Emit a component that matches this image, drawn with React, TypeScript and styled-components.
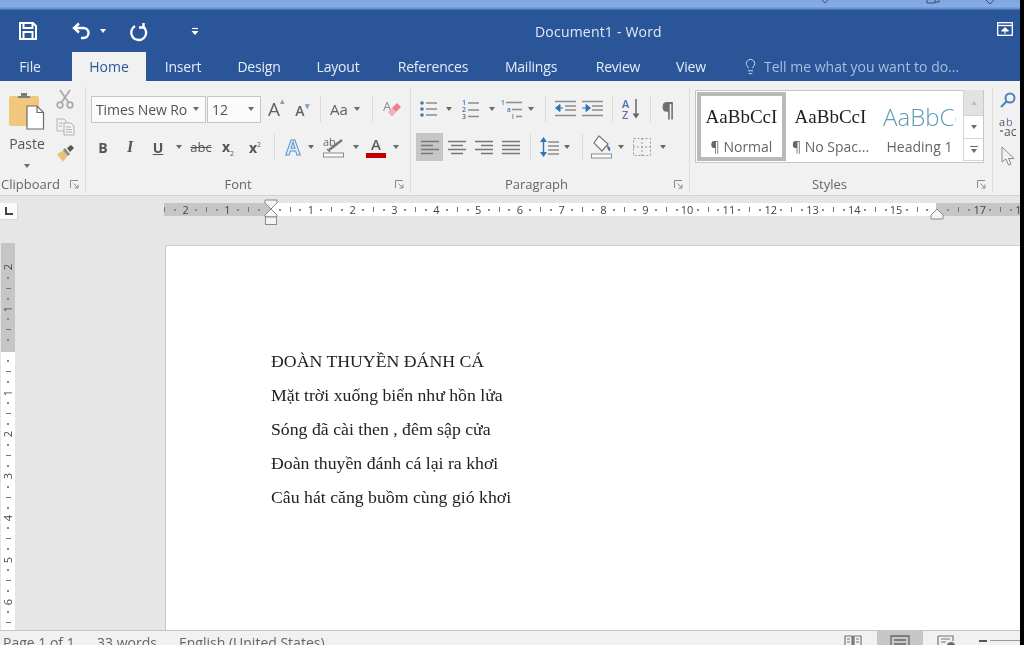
import React from "react";
import styled, { createGlobalStyle } from "styled-components";
import { Lightbulb } from "lucide-react";

const UI_FONT = `"Open Sans", "Noto Sans", sans-serif`;

const GlobalStyle = createGlobalStyle`
  html, body {
    margin: 0;
    padding: 0;
    background: #000000;
  }
  * {
    box-sizing: border-box;
  }
  svg {
    overflow: visible;
  }
`;

const TABS = [
  { label: "Insert", width: 74 },
  { label: "Design", width: 78 },
  { label: "Layout", width: 80 },
  { label: "References", width: 110 },
  { label: "Mailings", width: 86 },
  { label: "Review", width: 88 },
  { label: "View", width: 58 },
];

const POEM = [
  "ĐOÀN THUYỀN ĐÁNH CÁ",
  "Mặt trời xuống biển như hồn lửa",
  "Sóng đã cài then , đêm sập cửa",
  "Đoàn thuyền đánh cá lại ra khơi",
  "Câu hát căng buồm cùng gió khơi",
];

const H_NUMBERS = [-2, -1, 0, 1, 2, 3, 4, 5, 6, 7, 8, 9, 10, 11, 12, 13, 14, 15, 16, 17, 18];
const V_NUMBERS = [2, 1, 0, 1, 2, 3, 4, 5, 6, 7];

export default function App() {
  return (
    <Screen>
      <GlobalStyle />
      <Word>
        <TopStrip>
          <svg width="10" height="4" viewBox="0 0 10 4"><path d="M2 0l3 3 3-3" fill="none" stroke="#3a4f70" strokeWidth="1" /></svg>
          <StripGap $w={96} />
          <svg width="14" height="5" viewBox="0 0 14 5"><path d="M1 0v3h8V0M9 2h4V0" fill="none" stroke="#3a4f70" strokeWidth="1" /></svg>
          <StripGap $w={44} />
          <svg width="12" height="5" viewBox="0 0 12 5"><path d="M2 0l4 4 4-4" fill="none" stroke="#3a4f70" strokeWidth="1" /></svg>
        </TopStrip>
        <TitleBar>
          <QuickAccess>
            <QuickSlot $w={54}><SaveIcon /></QuickSlot>
            <QuickSlot $w={24}><UndoIcon /></QuickSlot>
            <QuickSlot $w={14} $indent={4}><Caret $light /></QuickSlot>
            <QuickSlot $w={38} $indent={19}><RedoIcon /></QuickSlot>
            <QuickSlot $w={68} $indent={43}><CustomizeIcon /></QuickSlot>
          </QuickAccess>
          <DocTitle>Document1 - Word</DocTitle>
          <RibbonDisplay><RibbonDisplayIcon /></RibbonDisplay>
        </TitleBar>
        <TabBar>
          <Tab $w={72} $pr={12}>File</Tab>
          <ActiveTab>Home</ActiveTab>
          {TABS.map((t) => (
            <Tab key={t.label} $w={t.width}>{t.label}</Tab>
          ))}
          <TellMe>
            <Lightbulb size={17} strokeWidth={1.4} color="#c5d4ea" />
            <span>Tell me what you want to do...</span>
          </TellMe>
        </TabBar>
        <Ribbon>
          <Group $w={86}>
            <ClipboardBody>
              <PasteColumn>
                <PasteIcon />
                <PasteLabel>Paste</PasteLabel>
                <Caret />
              </PasteColumn>
              <SmallColumn>
                <CutIcon />
                <CopyIcon />
                <PainterIcon />
              </SmallColumn>
            </ClipboardBody>
            <GroupFooter>
              <GroupLabel $pr={9}>Clipboard</GroupLabel>
              <Launcher />
            </GroupFooter>
          </Group>

          <Group $w={325} $pl={5}>
            <GroupBody>
              <ToolRow>
                <FontBox $w={115}><span>Times New Ro</span><Caret /></FontBox>
                <FontBox $w={54}><span>12</span><Caret /></FontBox>
                <Tool $w={24}><BigA>A<TinyMark>▴</TinyMark></BigA></Tool>
                <Tool $w={28}><SmallA>A<TinyMark>▾</TinyMark></SmallA></Tool>
                <Sep $m={6} />
                <Tool $w={24}><CaseText>Aa</CaseText></Tool>
                <Tool $w={12}><Caret /></Tool>
                <Sep $m={9} />
                <Tool $w={20}><ClearIcon /></Tool>
              </ToolRow>
              <ToolRow>
                <Tool $w={24}><BoldB>B</BoldB></Tool>
                <Tool $w={30}><ItalicI>I</ItalicI></Tool>
                <Tool $w={26}><UnderU>U</UnderU></Tool>
                <Tool $w={16}><Caret /></Tool>
                <Tool $w={28}><StrikeAbc>abc</StrikeAbc></Tool>
                <Tool $w={26}><ScriptX>x<sub>2</sub></ScriptX></Tool>
                <Tool $w={28}><ScriptX>x<sup>2</sup></ScriptX></Tool>
                <Sep $m={5} />
                <Tool $w={26}><EffectA>A</EffectA></Tool>
                <Tool $w={10}><Caret /></Tool>
                <Tool $w={36}><HighlightIcon /></Tool>
                <Tool $w={8}><Caret /></Tool>
                <Tool $w={32}><ColorA>A<ColorBar /></ColorA></Tool>
                <Tool $w={8}><Caret /></Tool>
              </ToolRow>
            </GroupBody>
            <GroupFooter>
              <GroupLabel $pr={10}>Font</GroupLabel>
              <Launcher />
            </GroupFooter>
          </Group>

          <Group $w={279} $pl={5}>
            <GroupBody>
              <ToolRow>
                <Tool $w={26}><BulletsIcon /></Tool>
                <Tool $w={14}><Caret /></Tool>
                <Tool $w={30}><NumbersIcon /></Tool>
                <Tool $w={12}><Caret /></Tool>
                <Tool $w={28}><MultilevelIcon /></Tool>
                <Tool $w={10}><Caret /></Tool>
                <Sep $m={9} />
                <Tool $w={20}><IndentIcon /></Tool>
                <Tool $w={34}><IndentIcon $flip /></Tool>
                <Sep $m={3} />
                <Tool $w={32}><SortIcon /></Tool>
                <Sep $m={2} />
                <Tool $w={30}><Pilcrow>¶</Pilcrow></Tool>
              </ToolRow>
              <ToolRow>
                <Tool $w={27} $active><AlignIcon kind="left" /></Tool>
                <Tool $w={27}><AlignIcon kind="center" /></Tool>
                <Tool $w={28}><AlignIcon kind="right" /></Tool>
                <Tool $w={26}><AlignIcon kind="justify" /></Tool>
                <Sep $m={6} />
                <Tool $w={24}><LineSpacingIcon /></Tool>
                <Tool $w={12}><Caret /></Tool>
                <Sep $m={9} />
                <Tool $w={20}><ShadingIcon /></Tool>
                <Tool $w={18}><Caret /></Tool>
                <Tool $w={24}><BordersIcon /></Tool>
                <Tool $w={18}><Caret /></Tool>
              </ToolRow>
            </GroupBody>
            <GroupFooter>
              <GroupLabel $pr={17}>Paragraph</GroupLabel>
              <Launcher />
            </GroupFooter>
          </Group>

          <Group $w={303} $pl={5}>
            <Gallery>
              <StyleCard $selected>
                <StylePreview>AaBbCcI</StylePreview>
                <StyleName>¶ Normal</StyleName>
              </StyleCard>
              <StyleCard>
                <StylePreview>AaBbCcI</StylePreview>
                <StyleName>¶ No Spac...</StyleName>
              </StyleCard>
              <StyleCard>
                <HeadingPreview>AaBbCc</HeadingPreview>
                <StyleName>Heading 1</StyleName>
              </StyleCard>
              <GalleryScroll>
                <ScrollCell $h={26} $off><Caret $up $faint /></ScrollCell>
                <ScrollCell $h={23}><Caret /></ScrollCell>
                <ScrollCell $h={22}><MoreLine /><Caret /></ScrollCell>
              </GalleryScroll>
            </Gallery>
            <GroupFooter>
              <GroupLabel $pr={13}>Styles</GroupLabel>
              <Launcher />
            </GroupFooter>
          </Group>

          <EditingGroup>
            <SearchIcon />
            <ReplaceIcon />
            <SelectIcon />
          </EditingGroup>
        </Ribbon>

        <RulerRow>
          <TabSelector><TabStopIcon /></TabSelector>
          <RulerBar>
            <RulerTrack>
              {H_NUMBERS.map((n) => (
                <RulerUnit key={n}>
                  <Slot><Dot /></Slot>
                  <Slot><Tick /></Slot>
                  <Slot><Dot /></Slot>
                  <Slot>{n === 0 || n === 16 ? "" : Math.abs(n)}</Slot>
                </RulerUnit>
              ))}
            </RulerTrack>
            <LeftIndent><HourglassIcon /></LeftIndent>
            <RightIndent><RightIndentIcon /></RightIndent>
          </RulerBar>
        </RulerRow>

        <DocRow>
          <VRuler>
            {V_NUMBERS.map((n, i) => (
              <VUnit key={i}>
                <VSlot><VNumber>{n === 0 ? "" : n}</VNumber></VSlot>
                <VSlot><Dot /></VSlot>
                <VSlot><VTick /></VSlot>
                <VSlot><Dot /></VSlot>
              </VUnit>
            ))}
          </VRuler>
          <Page>
            {POEM.map((line) => (
              <PoemLine key={line}>{line}</PoemLine>
            ))}
          </Page>
        </DocRow>

        <StatusBar>
          <StatusText $w={94}>Page 1 of 1</StatusText>
          <StatusText $w={82}>33 words</StatusText>
          <StatusText>English (United States)</StatusText>
          <StatusRight>
            <ViewSlot $w={48}><ReadIcon /></ViewSlot>
            <ViewSlot $w={46} $active><PrintIcon /></ViewSlot>
            <ViewSlot $w={46}><WebIcon /></ViewSlot>
            <ZoomMinus />
            <ZoomLine />
          </StatusRight>
        </StatusBar>
      </Word>
    </Screen>
  );
}

/* ---------- icons ---------- */

const SaveIcon = () => (
  <svg width="20" height="20" viewBox="0 0 20 20" fill="none" stroke="#fff" strokeWidth="2">
    <path d="M2 2h13l3 3v13H2z" />
    <path d="M5.5 2v5h9V2M5.5 18v-7h9v7" />
  </svg>
);
const UndoIcon = () => (
  <svg width="19" height="18" viewBox="0 0 19 18" fill="none" stroke="#fff" strokeWidth="2.4">
    <path d="M7 1.5L2 6l5 4.5" />
    <path d="M2 6h9.5a4.7 4.7 0 0 1 0 10H9" />
  </svg>
);
const RedoIcon = () => (
  <svg width="19" height="19" viewBox="0 0 19 19" fill="none" stroke="#fff" strokeWidth="2.4">
    <path d="M6 4a7.5 7.5 0 1 0 8 .4" />
    <path d="M14.5 1v4.5H10" />
  </svg>
);
const CustomizeIcon = () => (
  <svg width="8" height="9" viewBox="0 0 8 9">
    <path d="M1 1.5h6" stroke="#fff" strokeWidth="1.2" />
    <path d="M0.5 4h7L4 8z" fill="#fff" />
  </svg>
);
const RibbonDisplayIcon = () => (
  <svg width="16" height="14" viewBox="0 0 16 14" fill="none" stroke="#fff" strokeWidth="1.3">
    <rect x="0.7" y="0.7" width="14.6" height="12.6" />
    <path d="M1 3.5h14" />
    <path d="M4.5 9l3.5-3.5L11.500 9zM8 9v3" fill="#fff" strokeWidth="1" />
  </svg>
);
const PasteIcon = () => (
  <svg width="38" height="38" viewBox="0 0 38 38">
    <rect x="1" y="4" width="30" height="30" rx="2" fill="#f0c77d" />
    <path d="M10 6V4h3V1h6v3h3v2z" fill="#7d7d7d" />
    <path d="M19 14h10l6.500 6.500V37H19z" fill="#fff" stroke="#6b6b6b" strokeWidth="1.2" />
    <path d="M29 14v6.500h6.500" fill="none" stroke="#6b6b6b" strokeWidth="1.2" />
  </svg>
);
const CutIcon = () => (
  <svg width="18" height="20" viewBox="0 0 18 20" fill="none" stroke="#ababab" strokeWidth="1.8">
    <circle cx="4" cy="16" r="2.800" />
    <circle cx="14" cy="16" r="2.800" />
    <path d="M5.500 13.500L14 1M12.500 13.500L4 1" />
  </svg>
);
const CopyIcon = () => (
  <svg width="19" height="18" viewBox="0 0 19 18" fill="#f1f1f1" stroke="#b2b2b2" strokeWidth="1">
    <path d="M1 1h7l2 2v10H1z" />
    <path d="M8 5h7l3 3v9H8z" />
    <path d="M3 5h4M3 8h3M10 9h5M10 11.500h6M10 14h6" />
  </svg>
);
const PainterIcon = () => (
  <svg width="20" height="18" viewBox="0 0 20 18">
    <path d="M9 5l-7 4 6 8 5-7z" fill="#e9c27a" />
    <path d="M8 5l2-2 5 6-2 2z" fill="#8a8a8a" />
    <path d="M12 3l4-3 3 3-4 4z" fill="#555" />
  </svg>
);
const ClearIcon = () => (
  <svg width="20" height="20" viewBox="0 0 20 20">
    <text x="1" y="12" fontSize="13" fontFamily="Open Sans, sans-serif" fill="#8c8c8c">A</text>
    <path d="M10 9l5-5 4 4-5 5z" fill="#ef7f8e" />
    <path d="M6 13l4-4 4 4-3 4H9z" fill="#f4b0ba" />
  </svg>
);
const HighlightIcon = () => (
  <svg width="22" height="22" viewBox="0 0 22 22">
    <text x="0" y="10" fontSize="11" fontFamily="Open Sans, sans-serif" fill="#666">ab</text>
    <path d="M6 14L19 4" stroke="#777" strokeWidth="2.4" />
    <path d="M4 13l3 3" stroke="#777" strokeWidth="1.4" />
    <rect x="0.500" y="17" width="20" height="4" fill="#fbfbfb" stroke="#8c8c8c" />
  </svg>
);
const BulletsIcon = () => (
  <svg width="18" height="18" viewBox="0 0 18 18">
    <g fill="#4a78a8">
      <circle cx="2" cy="3" r="1.800" />
      <circle cx="2" cy="9" r="1.800" />
      <circle cx="2" cy="15" r="1.800" />
    </g>
    <path d="M6 3h11M6 9h11M6 15h11" stroke="#8c8c8c" strokeWidth="1.300" />
  </svg>
);
const NumbersIcon = () => (
  <svg width="18" height="20" viewBox="0 0 18 20">
    <g fontSize="7" fontFamily="Open Sans, sans-serif" fill="#3f75ab" fontWeight="600">
      <text x="0" y="6">1</text>
      <text x="0" y="13">2</text>
      <text x="0" y="20">3</text>
    </g>
    <path d="M6 4h11M6 11h11M6 17.500h11" stroke="#8c8c8c" strokeWidth="1.300" />
  </svg>
);
const MultilevelIcon = () => (
  <svg width="22" height="20" viewBox="0 0 22 20">
    <g fontSize="6.500" fontFamily="Open Sans, sans-serif" fill="#3f75ab" fontWeight="600">
      <text x="0" y="6">1</text>
      <text x="6" y="13">a</text>
      <text x="11" y="20">i</text>
    </g>
    <path d="M5 3.500h16M11 10.500h10M15 17.500h6" stroke="#8c8c8c" strokeWidth="1.300" />
  </svg>
);
const IndentIcon = ({ $flip }: { $flip?: boolean }) => (
  <svg width="21" height="18" viewBox="0 0 21 18">
    <path d="M0 1.500h21M10 6h11M10 10h11M0 15.500h21" stroke="#8c8c8c" strokeWidth="1.300" />
    <path d={$flip ? "M0 8h5M4 4.500l4.500 3.500L4 11.500z" : "M8 8H4M5 4.500L0.500 8 5 11.500z"} fill="#2e75b6" stroke="#2e75b6" strokeWidth="1" />
  </svg>
);
const SortIcon = () => (
  <svg width="20" height="22" viewBox="0 0 20 22">
    <text x="0" y="10" fontSize="11" fontFamily="Open Sans, sans-serif" fill="#3f75ab" fontWeight="600">A</text>
    <text x="0" y="21" fontSize="11" fontFamily="Open Sans, sans-serif" fill="#8a5aa8" fontWeight="600">Z</text>
    <path d="M14 1v18" stroke="#666" strokeWidth="1.500" />
    <path d="M10.500 15.500h7L14 20.500z" fill="#666" />
  </svg>
);
const ALIGN_LINES = {
  left: "M0 1.500h18M0 5.500h12M0 9.500h18M0 13.500h12",
  center: "M0 1.500h18M3 5.500h12M0 9.500h18M3 13.500h12",
  right: "M0 1.500h18M6 5.500h12M0 9.500h18M6 13.500h12",
  justify: "M0 1.500h18M0 5.500h18M0 9.500h18M0 13.500h18",
};
const AlignIcon = ({ kind }: { kind: keyof typeof ALIGN_LINES }) => (
  <svg width="18" height="15" viewBox="0 0 18 15">
    <path d={ALIGN_LINES[kind]} stroke="#777" strokeWidth="1.300" />
  </svg>
);
const LineSpacingIcon = () => (
  <svg width="19" height="22" viewBox="0 0 19 22">
    <path d="M8 6h11M8 10h11M8 14h11M8 18h11" stroke="#8c8c8c" strokeWidth="1.300" />
    <path d="M0 6l3.500-5L7 6zM0 16l3.500 5L7 16z" fill="#2e75b6" />
    <path d="M3.500 5v12" stroke="#2e75b6" strokeWidth="1.400" />
  </svg>
);
const ShadingIcon = () => (
  <svg width="23" height="24" viewBox="0 0 23 24">
    <path d="M8 1l9 8-6 7-8-8z" fill="#fbfbfb" stroke="#777" strokeWidth="1.200" />
    <path d="M16 10c3 2 4 4 3 6-2 0-3-3-3-6z" fill="#3f75ab" />
    <rect x="0.500" y="19" width="20" height="4" fill="#fbfbfb" stroke="#8c8c8c" />
  </svg>
);
const BordersIcon = () => (
  <svg width="18" height="18" viewBox="0 0 18 18" fill="none" stroke="#9a9a9a" strokeDasharray="2 2">
    <rect x="0.500" y="0.500" width="17" height="17" />
    <path d="M9 0v18M0 9h18" />
  </svg>
);
const LauncherIcon = () => (
  <svg width="9" height="9" viewBox="0 0 9 9" fill="none" stroke="#8a8a8a" strokeWidth="1">
    <path d="M0.500 8V0.500H8" />
    <path d="M3.500 3.500L8 8M8 4.500V8H4.500" />
  </svg>
);
const SearchIcon = () => (
  <svg width="16" height="16" viewBox="0 0 16 16" fill="none" stroke="#4a82bd" strokeWidth="2">
    <circle cx="10" cy="6" r="4.500" />
    <path d="M6.500 9.500L1 15" />
  </svg>
);
const ReplaceIcon = () => (
  <svg width="18" height="20" viewBox="0 0 18 20">
    <text x="0" y="9" fontSize="11" fontFamily="Open Sans, sans-serif" fill="#555">a</text>
    <text x="7" y="9" fontSize="11" fontFamily="Open Sans, sans-serif" fill="#8a5aa8">b</text>
    <text x="5" y="19" fontSize="12" fontFamily="Open Sans, sans-serif" fill="#555">ac</text>
    <path d="M1 14h3" stroke="#4a82bd" strokeWidth="1.500" />
  </svg>
);
const SelectIcon = () => (
  <svg width="14" height="20" viewBox="0 0 14 20">
    <path d="M1 1v15l4-3 2.500 6 2.500-1-2.500-5.500H13z" fill="#f1f1f1" stroke="#8a8a8a" />
  </svg>
);
const TabStopIcon = () => (
  <svg width="8" height="8" viewBox="0 0 8 8">
    <path d="M1 0v7h7" fill="none" stroke="#444" strokeWidth="2" />
  </svg>
);
const HourglassIcon = () => (
  <svg width="14" height="26" viewBox="0 0 14 26" fill="#f4f4f4" stroke="#8a8a8a" strokeWidth="1">
    <path d="M1 1h12v3l-6 6-6-6z" />
    <path d="M7 10l6 6v2H1v-2z" />
    <rect x="1.500" y="18" width="11" height="7.500" />
  </svg>
);
const RightIndentIcon = () => (
  <svg width="14" height="12" viewBox="0 0 14 12" fill="#f4f4f4" stroke="#8a8a8a" strokeWidth="1">
    <path d="M7 1l6 6v4H1V7z" />
  </svg>
);
const ReadIcon = () => (
  <svg width="18" height="14" viewBox="0 0 18 14" fill="none" stroke="#777" strokeWidth="1.200">
    <path d="M1 1h7v12H1zM10 1h7v12h-7zM9 1v12M3 4h3M3 7h3M12 4h3M12 7h3" />
  </svg>
);
const PrintIcon = () => (
  <svg width="20" height="14" viewBox="0 0 20 14" fill="none" stroke="#666" strokeWidth="1.300">
    <path d="M1 1h18v13H1zM4 5h12M4 9h12" />
  </svg>
);
const WebIcon = () => (
  <svg width="19" height="14" viewBox="0 0 19 14" fill="none" stroke="#777" strokeWidth="1.200">
    <path d="M1 1h15v5M1 1v12h8M4 4h9M4 7h5" />
    <circle cx="14" cy="11" r="3.500" fill="#666" />
  </svg>
);

const Launcher = () => (
  <LauncherBox><LauncherIcon /></LauncherBox>
);

/* ---------- page ---------- */

const Screen = styled.div`
  display: flex;
  width: 1024px;
  height: 645px;
  overflow: hidden;
  background: #000000;
  font-family: ${UI_FONT};
  filter: blur(0.45px);
`;
const Word = styled.div`
  display: flex;
  flex-direction: column;
  width: 1020px;
  height: 645px;
  overflow: hidden;
  background: #e6e6e6;
`;
const TopStrip = styled.div`
  display: flex;
  justify-content: flex-end;
  align-items: flex-start;
  flex: none;
  height: 10px;
  padding-right: 24px;
  background: linear-gradient(#7fa7e3 0%, #86ace6 65%, #5f88c6 90%, #3a659f 100%);
`;
const StripGap = styled.span<{ $w: number }>`
  width: ${(p) => p.$w}px;
`;
const TitleBar = styled.div`
  display: flex;
  align-items: center;
  flex: none;
  height: 42px;
  padding-left: 18px;
  background: #2a5699;
  color: #ffffff;
`;
const QuickAccess = styled.div`
  display: flex;
  align-items: center;
  width: 517px;
  height: 38px;
`;
const QuickSlot = styled.span<{ $w: number; $indent?: number }>`
  display: flex;
  align-items: center;
  flex: none;
  width: ${(p) => p.$w}px;
  padding-left: ${(p) => p.$indent ?? 0}px;
`;
const DocTitle = styled.div`
  width: 127px;
  font-size: 14px;
  letter-spacing: 0.2px;
  white-space: nowrap;
  color: #dfe8f4;
`;
const RibbonDisplay = styled.div`
  display: flex;
  margin-left: auto;
  margin-right: 7px;
  margin-bottom: 4px;
`;
const TabBar = styled.div`
  display: flex;
  flex: none;
  height: 29px;
  background: #2a5699;
`;
const Tab = styled.div<{ $w: number; $pr?: number }>`
  display: flex;
  justify-content: center;
  align-items: center;
  width: ${(p) => p.$w}px;
  padding-right: ${(p) => p.$pr ?? 0}px;
  padding-bottom: 1px;
  font-size: 14px;
  letter-spacing: -0.2px;
  color: #e3ebf6;
`;
const ActiveTab = styled.div`
  display: flex;
  justify-content: center;
  align-items: center;
  width: 74px;
  padding-bottom: 1px;
  font-size: 14px;
  color: #2b579a;
  background: #f1f1f1;
`;
const TellMe = styled.div`
  display: flex;
  align-items: center;
  gap: 5px;
  margin-left: 22px;
  font-size: 14px;
  color: #a9bedd;
`;
const Ribbon = styled.div`
  display: flex;
  flex: none;
  height: 115px;
  padding: 6px 0 2px;
  border-bottom: 1px solid #d4d4d4;
  background: #f1f1f1;
`;
const Group = styled.div<{ $w: number; $pl?: number }>`
  display: flex;
  flex-direction: column;
  flex: none;
  width: ${(p) => p.$w}px;
  padding-left: ${(p) => p.$pl ?? 0}px;
  border-right: 1px solid #dcdcdc;
`;
const GroupBody = styled.div`
  display: flex;
  flex-direction: column;
  gap: 10px;
  padding-top: 8px;
`;
const ClipboardBody = styled.div`
  display: flex;
`;
const PasteColumn = styled.div`
  display: flex;
  flex-direction: column;
  align-items: center;
  width: 53px;
  padding: 5px 0 0 1px;
`;
const PasteLabel = styled.div`
  margin: 4px 0 11px;
  font-size: 14px;
  line-height: 19px;
  color: #555555;
`;
const SmallColumn = styled.div`
  display: flex;
  flex-direction: column;
  align-items: center;
  gap: 9px;
  width: 24px;
  padding-top: 2px;
`;
const GroupFooter = styled.div`
  display: flex;
  align-items: center;
  height: 18px;
  margin-top: auto;
`;
const GroupLabel = styled.div<{ $pr: number }>`
  flex: 1;
  padding-right: ${(p) => p.$pr}px;
  font-size: 13px;
  text-align: center;
  color: #666666;
  white-space: nowrap;
`;
const LauncherBox = styled.span`
  display: flex;
  margin-right: 6px;
`;
const ToolRow = styled.div`
  display: flex;
  align-items: center;
  height: 28px;
`;
const Tool = styled.span<{ $w: number; $active?: boolean }>`
  display: flex;
  justify-content: center;
  align-items: center;
  flex: none;
  width: ${(p) => p.$w}px;
  height: 28px;
  background: ${(p) => (p.$active ? "#c6c6c6" : "transparent")};
`;
const Sep = styled.span<{ $m: number }>`
  flex: none;
  width: 1px;
  height: 26px;
  margin: 0 ${(p) => p.$m}px;
  background: #dadada;
`;
const Caret = styled.span<{ $light?: boolean; $up?: boolean; $faint?: boolean }>`
  display: block;
  flex: none;
  width: 0;
  height: 0;
  border-left: 3.5px solid transparent;
  border-right: 3.5px solid transparent;
  ${(p) => {
    const color = p.$light ? "#ffffff" : p.$faint ? "#bdbdbd" : "#6a6a6a";
    return p.$up ? `border-bottom: 4px solid ${color};` : `border-top: 4px solid ${color};`;
  }}
`;
const FontBox = styled.div<{ $w: number }>`
  display: flex;
  justify-content: space-between;
  align-items: center;
  flex: none;
  width: ${(p) => p.$w}px;
  height: 27px;
  margin-right: 1px;
  padding: 0 6px 0 4px;
  border: 1px solid #c6c6c6;
  background: #fbfbfb;
  font-size: 14px;
  letter-spacing: -0.1px;
  color: #555555;
  white-space: nowrap;
`;
const BigA = styled.span`
  position: relative;
  font-size: 19px;
  color: #5f5f5f;
`;
const SmallA = styled.span`
  position: relative;
  top: 1px;
  font-size: 14px;
  font-weight: 600;
  color: #5f5f5f;
`;
const TinyMark = styled.span`
  position: absolute;
  top: -2px;
  left: 100%;
  font-size: 9px;
  color: #7d9cc0;
`;
const CaseText = styled.span`
  font-size: 15px;
  color: #5f5f5f;
`;
const BoldB = styled.span`
  font-size: 14px;
  font-weight: 700;
  color: #555555;
`;
const ItalicI = styled.span`
  font-family: "Liberation Serif", serif;
  font-size: 16px;
  font-style: italic;
  font-weight: 700;
  color: #555555;
`;
const UnderU = styled.span`
  font-size: 14px;
  font-weight: 700;
  color: #555555;
  text-decoration: underline;
`;
const StrikeAbc = styled.span`
  font-size: 13px;
  color: #555555;
  text-decoration: line-through;
`;
const ScriptX = styled.span`
  font-size: 14px;
  font-weight: 700;
  color: #555555;
  sub, sup {
    font-size: 7px;
    font-weight: 400;
  }
`;
const EffectA = styled.span`
  font-size: 21px;
  font-weight: 700;
  line-height: 24px;
  color: #e5eff8;
  -webkit-text-stroke: 1px #5b94cc;
`;
const ColorA = styled.span`
  display: flex;
  flex-direction: column;
  align-items: center;
  font-size: 15px;
  font-weight: 600;
  line-height: 17px;
  color: #5f5f5f;
`;
const ColorBar = styled.span`
  width: 20px;
  height: 5px;
  background: #c00000;
`;
const Pilcrow = styled.span`
  font-size: 20px;
  font-weight: 700;
  color: #6f6f6f;
`;
const Gallery = styled.div`
  display: flex;
  width: 289px;
  height: 73px;
  margin-top: 3px;
  padding: 1px 0 1px 1px;
  border: 1px solid #c6c6c6;
  background: #ffffff;
`;
const StyleCard = styled.div<{ $selected?: boolean }>`
  display: flex;
  flex-direction: column;
  align-items: center;
  flex: none;
  width: 89px;
  padding-top: ${(p) => (p.$selected ? "9px" : "13px")};
  border: ${(p) => (p.$selected ? "4px solid #b9b9b9" : "none")};
`;
const StylePreview = styled.div`
  font-family: "Liberation Serif", serif;
  font-size: 19px;
  line-height: 24px;
  color: #222222;
  white-space: nowrap;
`;
const HeadingPreview = styled.div`
  width: 73px;
  overflow: hidden;
  font-size: 24px;
  font-weight: 300;
  line-height: 24px;
  color: #5f9ab8;
  white-space: nowrap;
`;
const StyleName = styled.div`
  margin-top: 8px;
  font-size: 14px;
  line-height: 19px;
  color: #666666;
  white-space: nowrap;
`;
const GalleryScroll = styled.div`
  display: flex;
  flex-direction: column;
  flex: none;
  width: 20px;
  margin: -2px 0 0 -1px;
  border-left: 1px solid #d4d4d4;
`;
const ScrollCell = styled.div<{ $h: number; $off?: boolean }>`
  display: flex;
  flex-direction: column;
  justify-content: center;
  align-items: center;
  gap: 2px;
  height: ${(p) => p.$h}px;
  border-bottom: 1px solid #d4d4d4;
  background: ${(p) => (p.$off ? "#e2e2e2" : "#ffffff")};
`;
const MoreLine = styled.span`
  width: 8px;
  height: 1px;
  background: #6a6a6a;
`;
const EditingGroup = styled.div`
  display: flex;
  flex-direction: column;
  align-items: center;
  gap: 9px;
  width: 34px;
  padding: 5px 0 0 2px;
`;
const RulerRow = styled.div`
  display: flex;
  align-items: flex-start;
  flex: none;
  height: 49px;
  padding-top: 7px;
`;
const TabSelector = styled.div`
  display: flex;
  justify-content: center;
  align-items: center;
  flex: none;
  width: 17px;
  height: 16px;
  margin-right: 147px;
  background: #fbfbfb;
  box-shadow: 1px 1px 0 #d8d8d8;
`;
const RulerBar = styled.div`
  position: relative;
  flex: 1;
  height: 13px;
  background: linear-gradient(90deg, #c6c6c6 106px, #ffffff 106px, #ffffff 772px, #c6c6c6 772px);
  font-size: 11px;
  color: #444444;
`;
const RulerTrack = styled.div`
  display: flex;
  height: 13px;
  overflow: hidden;
`;
const RulerUnit = styled.div`
  display: flex;
  flex: none;
  width: 41.8px;
  &:first-child {
    margin-left: -15px;
  }
`;
const Slot = styled.span`
  display: flex;
  justify-content: center;
  align-items: center;
  width: 25%;
  line-height: 13px;
`;
const Dot = styled.span`
  width: 2px;
  height: 2px;
  background: #8a8a8a;
`;
const Tick = styled.span`
  width: 1px;
  height: 5px;
  background: #777777;
`;
const LeftIndent = styled.span`
  position: absolute;
  top: -4px;
  left: 100px;
  display: flex;
`;
const RightIndent = styled.span`
  position: absolute;
  top: 5px;
  left: 766px;
  display: flex;
`;
const DocRow = styled.div`
  display: flex;
  flex: none;
  height: 385px;
`;
const VRuler = styled.div`
  display: flex;
  flex-direction: column;
  flex: none;
  width: 14px;
  height: 387px;
  margin: -2px 0 0 1px;
  padding-top: 19px;
  overflow: hidden;
  background: linear-gradient(#c6c6c6 109px, #ffffff 109px);
  font-size: 11px;
  color: #444444;
`;
const VUnit = styled.div`
  display: flex;
  flex-direction: column;
  flex: none;
  height: 41.8px;
`;
const VSlot = styled.span`
  display: flex;
  justify-content: center;
  align-items: center;
  height: 25%;
`;
const VNumber = styled.span`
  line-height: 10px;
  transform: rotate(-90deg);
`;
const VTick = styled.span`
  width: 5px;
  height: 1px;
  background: #777777;
`;
const Page = styled.div`
  flex: 1;
  margin-left: 150px;
  padding: 98px 0 0 105px;
  border-top: 1px solid #cfcfcf;
  border-left: 1px solid #c6c6c6;
  background: #ffffff;
`;
const PoemLine = styled.div`
  font-family: "Liberation Serif", serif;
  font-size: 17.75px;
  line-height: 34px;
  color: #222222;
`;
const StatusBar = styled.div`
  display: flex;
  flex: none;
  height: 15px;
  padding-left: 3px;
  border-top: 1px solid #c6c6c6;
  background: #f1f1f1;
  font-size: 14px;
  color: #666666;
`;
const StatusText = styled.div<{ $w?: number }>`
  flex: none;
  width: ${(p) => (p.$w ? `${p.$w}px` : "auto")};
  padding-top: 2px;
  line-height: 19px;
  white-space: nowrap;
`;
const StatusRight = styled.div`
  display: flex;
  margin-left: auto;
`;
const ViewSlot = styled.span<{ $w: number; $active?: boolean }>`
  display: flex;
  justify-content: center;
  flex: none;
  width: ${(p) => p.$w}px;
  padding-top: 4px;
  background: ${(p) => (p.$active ? "#c6c6c6" : "transparent")};
`;
const ZoomMinus = styled.span`
  width: 8px;
  height: 2px;
  margin: 9px 3px 0 10px;
  background: #555555;
`;
const ZoomLine = styled.span`
  width: 30px;
  height: 1px;
  margin-top: 9px;
  background: #999999;
`;
